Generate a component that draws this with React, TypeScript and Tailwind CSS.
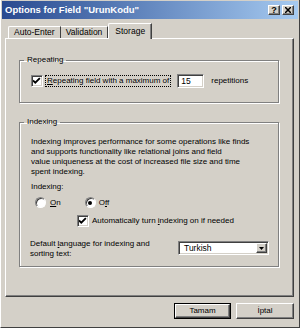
import React from "react";

const raised =
  "bg-[#d4d0c8] border border-t-white border-l-white border-r-[#404040] border-b-[#404040] shadow-[inset_-1px_-1px_0_#808080]";
const sunken =
  "bg-white border border-t-[#808080] border-l-[#808080] border-r-white border-b-white shadow-[inset_1px_1px_0_#404040,inset_-1px_-1px_0_#d4d0c8]";

const CheckBox = ({ checked }: { checked: boolean }) => (
  <div className={`w-[12px] h-[12px] shrink-0 flex items-center justify-center ${sunken}`}>
    {checked && (
      <svg width="8" height="8" viewBox="0 0 7 7">
        <path d="M0 3 L2 5 L6 1" stroke="black" strokeWidth="1.6" fill="none" />
      </svg>
    )}
  </div>
);

const Radio = ({ checked }: { checked: boolean }) => (
  <div className="w-[11px] h-[11px] shrink-0 rounded-full bg-white border border-t-[#808080] border-l-[#808080] border-r-white border-b-white shadow-[inset_1px_1px_0_#404040] flex items-center justify-center">
    {checked && <div className="w-[4px] h-[4px] rounded-full bg-black" />}
  </div>
);

const GroupBox = ({
  title,
  className,
  children,
}: {
  title: string;
  className: string;
  children: React.ReactNode;
}) => (
  <fieldset
    className={`ml-[13px] mr-[14px] border border-[#808080] shadow-[inset_1px_1px_0_white,1px_1px_0_white] ${className}`}
  >
    <legend className="ml-[4px] px-[3px] leading-[10px]">{title}</legend>
    {children}
  </fieldset>
);

export default function App() {
  return (
    <div className="w-[300px] h-[328px] bg-[#d4d0c8] flex flex-col font-['Liberation_Sans',Arial,sans-serif] text-[8px] text-black border-l border-l-white border-r border-r-[#404040] border-b border-b-[#404040]">
      {/* title bar */}
      <div className="h-[18px] mx-[1px] mt-[1px] flex items-center justify-between pl-[3px] pr-[4px] bg-gradient-to-r from-[#2a4a90] to-[#a6caf0]">
        <span className="text-white font-bold text-[9.5px]">Options for Field "UrunKodu"</span>
        <div className="flex gap-[2px]">
          <div className={`w-[12px] h-[10px] flex items-center justify-center text-[9px] font-bold leading-none ${raised}`}>
            ?
          </div>
          <div className={`w-[12px] h-[10px] flex items-center justify-center ${raised}`}>
            <svg width="6" height="6" viewBox="0 0 6 6">
              <path d="M0 0 L6 6 M6 0 L0 6" stroke="black" strokeWidth="1.5" />
            </svg>
          </div>
        </div>
      </div>

      {/* tabs */}
      <div className="h-[19px] flex items-end pl-[7px] text-[8.5px]">
        <div className="h-[12px] px-[5px] flex items-center bg-[#d4d0c8] border-t border-l border-white border-r border-r-[#404040] rounded-tl-[2px]">
          Auto-Enter
        </div>
        <div className="h-[12px] px-[5px] flex items-center bg-[#d4d0c8] border-t border-white border-r border-r-[#404040]">
          Validation
        </div>
        <div className="h-[16px] px-[6px] -mb-[1px] relative flex items-center bg-[#d4d0c8] border-t border-l border-white border-r border-r-[#404040] shadow-[inset_-1px_0_0_#808080] rounded-tl-[2px]">
          Storage
        </div>
      </div>

      {/* panel */}
      <div className={`h-[259px] ml-[4px] mr-[5px] flex flex-col ${raised}`}>
        <GroupBox title="Repeating" className="mt-[16px] h-[48px]">
          <div className="flex items-center pl-[11px] mt-[9px]">
            <CheckBox checked />
            <span className="ml-[2px] px-[1px] border border-dotted border-black leading-[10px]">
              <u>R</u>epeating field with a maximum of
            </span>
            <div className={`ml-[6px] w-[27px] h-[14px] flex items-center pl-[3px] text-[8.5px] ${sunken}`}>15</div>
            <span className="ml-[7px]">repetitions</span>
          </div>
        </GroupBox>

        <GroupBox title="Indexing" className="mt-[14px] h-[150px]">
          <div className="pl-[11px] pr-[6px] mt-[10px] leading-[10px]">
            Indexing improves performance for some operations like finds
            <br />
            and supports functionality like relational joins and field
            <br />
            value uniqueness at the cost of increased file size and time
            <br />
            spent indexing.
          </div>
          <div className="pl-[11px] mt-[5px] leading-[10px]">Indexing:</div>
          <div className="flex items-center pl-[15px] mt-[5px] h-[11px]">
            <Radio checked={false} />
            <span className="ml-[4px]">
              <u>O</u>n
            </span>
            <div className="ml-[24px]">
              <Radio checked />
            </div>
            <span className="ml-[3px]">
              O<u>f</u>f
            </span>
          </div>
          <div className="flex items-center pl-[57px] mt-[7px] h-[12px]">
            <CheckBox checked />
            <span className="ml-[3px]">
              Automatically turn <u>i</u>ndexing on if needed
            </span>
          </div>
          <div className="flex items-start pl-[10px] mt-[12px]">
            <div className="w-[138px] leading-[10px]">
              Default <u>l</u>anguage for indexing and
              <br />
              sorting text:
            </div>
            <div className={`ml-[10px] mt-[2px] w-[91px] h-[14px] flex items-center justify-between pl-[5px] pr-[1px] text-[8.5px] ${sunken}`}>
              <span>Turkish</span>
              <div className={`w-[11px] h-[10px] flex items-center justify-center ${raised}`}>
                <svg width="5" height="3" viewBox="0 0 5 3">
                  <path d="M0 0 L5 0 L2.5 3 Z" fill="black" />
                </svg>
              </div>
            </div>
          </div>
        </GroupBox>
      </div>

      {/* buttons */}
      <div className="flex justify-end gap-[5px] mr-[5px] mt-[6px]">
        <div className="w-[57px] h-[16px] border border-black">
          <div className={`h-full flex items-center justify-center ${raised}`}>Tamam</div>
        </div>
        <div className={`w-[58px] h-[16px] flex items-center justify-center ${raised}`}>İptal</div>
      </div>
    </div>
  );
}
